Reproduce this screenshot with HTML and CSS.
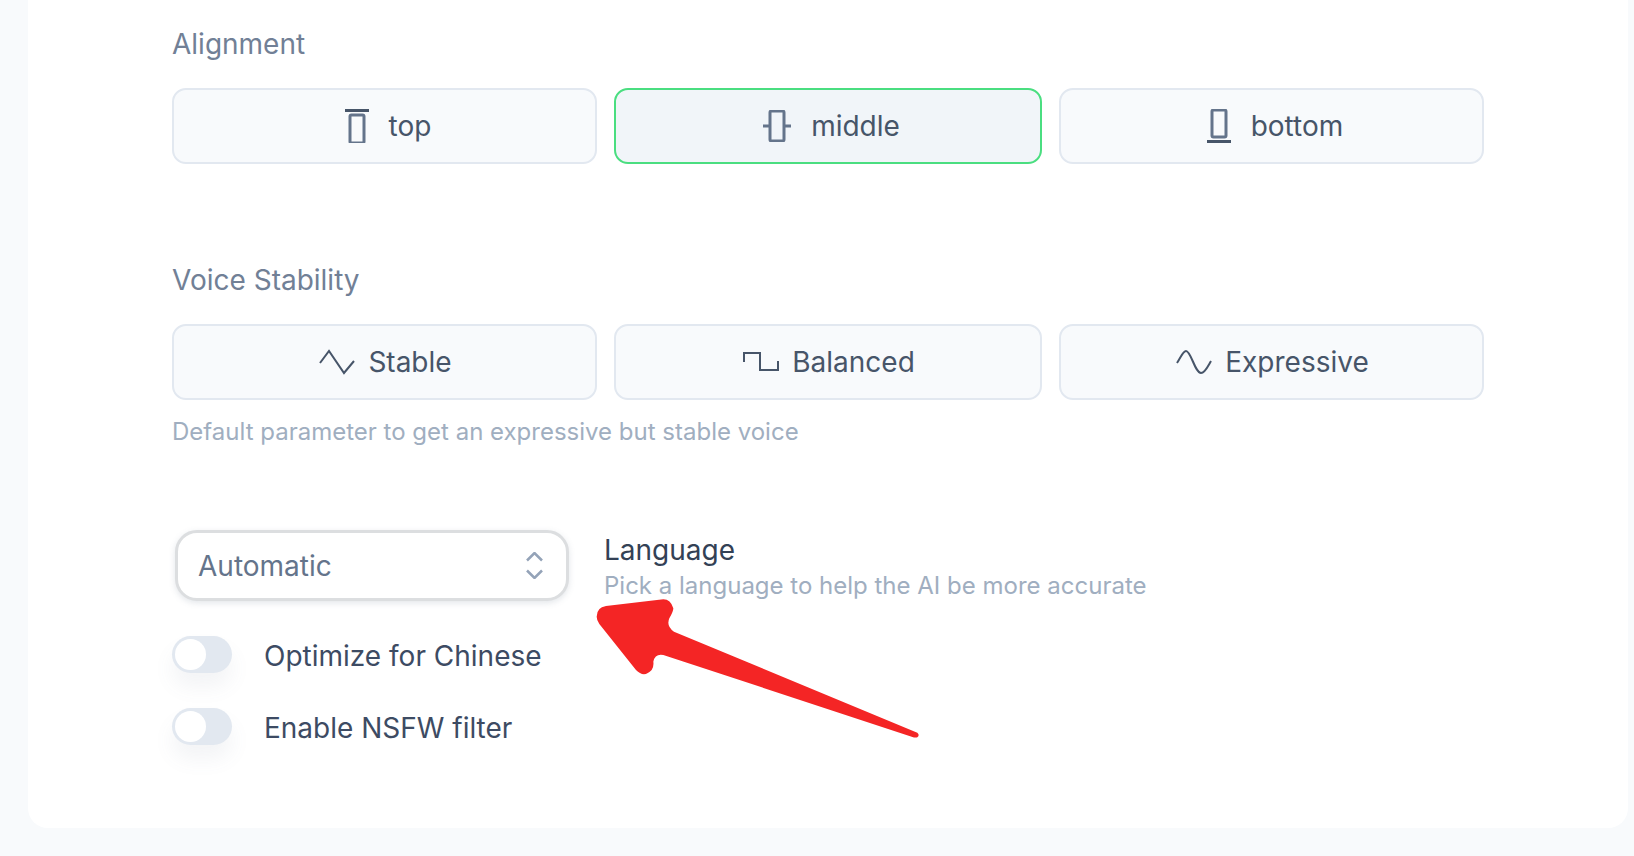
FILE: index.html
```html
<!DOCTYPE html>
<html lang="en">
<head>
  <meta charset="UTF-8">
  <meta name="viewport" content="width=device-width, initial-scale=1.0">
  <title>Settings</title>
  <link rel="stylesheet" href="styles.css">
</head>
<body>
  <main class="card">
    <section class="group">
      <h3 class="group-label">Alignment</h3>
      <div class="choices">
        <button class="choice shifted">
          <svg class="icon" width="24" height="34" viewBox="0 0 24 34"><path class="dark" d="M0 1.5h24"/><rect x="5" y="6" width="14" height="28" rx="1.5"/></svg>
          <span class="choice-gap">top</span>
        </button>
        <button class="choice shifted active">
          <svg class="icon" width="28" height="32" viewBox="0 0 28 32"><rect x="7" y="1" width="14" height="30" rx="1.5"/><path d="M0 16h7M21 16h7"/></svg>
          <span class="choice-gap">middle</span>
        </button>
        <button class="choice shifted">
          <svg class="icon" width="24" height="34" viewBox="0 0 24 34"><rect x="5" y="1" width="14" height="27" rx="1.5"/><path class="dark" d="M0 32.5h24"/></svg>
          <span class="choice-gap">bottom</span>
        </button>
      </div>
    </section>

    <section class="group stability">
      <h3 class="group-label">Voice Stability</h3>
      <div class="choices">
        <button class="choice">
          <svg class="wave" width="36" height="26" viewBox="0 0 36 26"><path d="M1 14L10 2L25 24L35 12"/></svg>
          <span>Stable</span>
        </button>
        <button class="choice">
          <svg class="wave" width="36" height="22" viewBox="0 0 36 22"><path d="M1 11V2H17V19H35V10"/></svg>
          <span>Balanced</span>
        </button>
        <button class="choice">
          <svg class="wave" width="36" height="26" viewBox="0 0 36 26"><path d="M1 14C5 8 7 2 10 2C15 2 19 24 25 24C29 24 32 17 35 12"/></svg>
          <span>Expressive</span>
        </button>
      </div>
      <p class="hint">Default parameter to get an expressive but stable voice</p>
    </section>

    <section class="language-row">
      <div class="select">
        <span>Automatic</span>
        <svg class="updown" width="17" height="27" viewBox="0 0 17 27"><path d="M1 8.5L8.5 1L16 8.5M1 18.5L8.5 26L16 18.5"/></svg>
      </div>
      <div class="language-text">
        <div class="language-title">Language</div>
        <div class="language-sub">Pick a language to help the AI be more accurate</div>
      </div>
    </section>

    <label class="toggle-row">
      <span class="toggle"><span class="knob"></span></span>
      <span class="toggle-label">Optimize for Chinese</span>
    </label>
    <label class="toggle-row">
      <span class="toggle"><span class="knob"></span></span>
      <span class="toggle-label">Enable NSFW filter</span>
    </label>

    <svg class="arrow" width="360" height="230" viewBox="0 0 1080 690">
      <path d="M50 290Q50 262 78 258L250 238Q272 238 280 265Q280 275 268 295Q258 318 282 335L1012 638Q1020 645 1012 652Q1006 654 995 650L250 405Q225 400 220 425Q222 440 215 450Q192 475 168 450L58 312Q50 300 50 290Z"/>
    </svg>
  </main>
</body>
</html>
```

FILE: styles.css
```css
* {
  box-sizing: border-box;
}
body {
  margin: 0;
  height: 856px;
  overflow: hidden;
  background-color: #f8fafc;
  font-family: Inter, "Liberation Sans", sans-serif;
}
.card {
  position: relative;
  height: 828px;
  margin: 0 6px 0 28px;
  padding: 24px 144px 0 144px;
  background-color: #fff;
  border-radius: 0 0 20px 20px;
}
.group-label {
  margin: 0 0 24px;
  font-size: 28px;
  line-height: 40px;
  font-weight: 400;
  color: #718096;
}
.choices {
  display: grid;
  grid-template-columns: 1fr 428px 1fr;
  gap: 17px;
}
.choice {
  display: flex;
  align-items: center;
  justify-content: center;
  gap: 13px;
  height: 76px;
  padding: 0 0 0 2px;
  background-color: #f8fafc;
  border: 2px solid #e2e8f0;
  border-radius: 14px;
  font-family: inherit;
  font-size: 28px;
  color: #475569;
}
.choice.shifted {
  gap: 14px;
  padding-left: 7px;
}
.choice.active {
  background-color: #f1f5f9;
  border-color: #4ade80;
}
.choice-gap {
  margin-left: 6px;
}
.icon {
  fill: none;
  stroke: #64748b;
  stroke-width: 3;
}
.icon .dark {
  stroke: #475569;
}
.wave {
  fill: none;
  stroke: #475569;
  stroke-width: 2;
}
.stability {
  margin-top: 96px;
}
.hint {
  margin: 14px 0 0;
  font-size: 24px;
  line-height: 36px;
  color: #a0aec0;
}
.language-row {
  display: flex;
  align-items: center;
  gap: 35px;
  margin: 80px 0 0 3px;
}
.select {
  display: flex;
  align-items: center;
  justify-content: space-between;
  width: 394px;
  height: 71px;
  padding: 0 23px 0 20px;
  background-color: #fff;
  border: 3px solid #dcdee0;
  border-radius: 22px;
  box-shadow: 0 2px 6px rgba(100, 116, 139, 0.18);
  font-size: 28px;
  color: #64748b;
}
.updown {
  fill: none;
  stroke: #94a3b8;
  stroke-width: 2.5;
}
.language-text {
  padding-top: 2px;
  margin-bottom: -1px;
}
.language-title {
  font-size: 28px;
  line-height: 36px;
  margin-bottom: 2px;
  color: #334155;
}
.language-sub {
  font-size: 24px;
  line-height: 32px;
  color: #a0aec0;
}
.toggle-row {
  display: flex;
  align-items: center;
  gap: 32px;
  margin-top: 35px;
  font-size: 28px;
  color: #3d4b63;
}
.toggle-label {
  padding-top: 2px;
}
.toggle {
  display: block;
  width: 60px;
  height: 37px;
  padding: 3px;
  background-color: #e2e8f0;
  border-radius: 19px;
  box-shadow: 0 14px 20px rgba(100, 116, 139, 0.08);
}
.knob {
  display: block;
  width: 31px;
  height: 31px;
  background-color: #fff;
  border-radius: 50%;
}
.arrow {
  position: absolute;
  left: 552px;
  top: 520px;
  fill: #f42525;
}
```
